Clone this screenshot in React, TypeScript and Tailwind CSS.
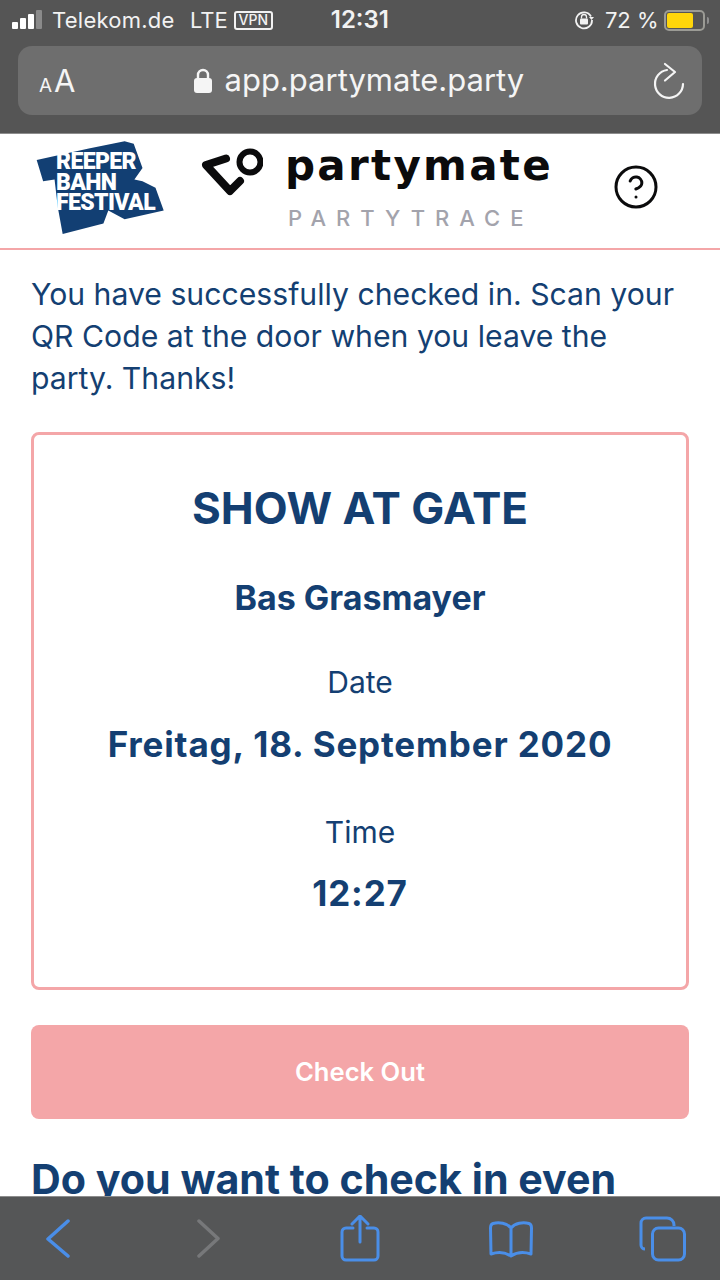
import React from 'react';
import { CircleHelp } from 'lucide-react';

const StatusBar: React.FC = () => (
  <div className="flex h-[40px] items-center pl-[12px] pr-[10px] text-[#f2f2f2]">
    <div className="mb-[2px] flex items-end gap-[2px]">
      <span className="h-[7px] w-[6px] rounded-[1px] bg-white" />
      <span className="h-[11px] w-[6px] rounded-[1px] bg-white" />
      <span className="h-[15px] w-[6px] rounded-[1px] bg-white" />
      <span className="h-[19px] w-[6px] rounded-[1px] bg-[#8a8a8a]" />
    </div>
    <span className="ml-[10px] w-[122px] text-[22px] tracking-[0.25px]">Telekom.de</span>
    <span className="ml-[16px] text-[22px]">LTE</span>
    <span className="ml-[6px] flex h-[19px] w-[39px] items-center justify-center rounded-[3px] border-2 border-[#f2f2f2] text-[14px] font-medium leading-none">
      VPN
    </span>
    <span className="ml-[58px] text-[24px] font-semibold">12:31</span>
    <svg className="ml-[185px]" width="20" height="20" viewBox="0 0 20 20" fill="none">
      <path d="M17 6.5A8 8 0 1 0 18 10" stroke="#f2f2f2" strokeWidth="1.8" />
      <path d="M15 7h5l-2.5 3z" fill="#f2f2f2" />
      <rect x="6" y="8.5" width="8" height="6" rx="1" fill="#f2f2f2" />
      <path d="M7.5 8.5V7a2.5 2.5 0 0 1 5 0v1.5" stroke="#f2f2f2" strokeWidth="1.3" />
    </svg>
    <span className="ml-[11px] text-[22px]">72 %</span>
    <div className="ml-[5px] flex h-[21px] w-[41px] items-center rounded-[5px] border-2 border-[#9b9b95] p-[1px]">
      <span className="h-[15px] w-[26px] rounded-[2px] bg-[#ffd60a]" />
    </div>
    <span className="ml-[2px] h-[7px] w-[2px] rounded-r-sm bg-[#8f8f8f]" />
  </div>
);

const UrlBar: React.FC = () => (
  <div className="mx-[18px] mt-[6px] flex h-[69px] items-center rounded-[14px] bg-[#6e6e6e] text-[#f5f5f5]">
    <span className="ml-[21px] flex items-baseline leading-none">
      <span className="text-[19px]">A</span>
      <span className="ml-[2px] text-[31px]">A</span>
    </span>
    <svg className="ml-[118px]" width="18" height="25" viewBox="0 0 18 25" fill="none">
      <path d="M4 11V7a5 5 0 0 1 10 0v4" stroke="#f5f5f5" strokeWidth="2.4" />
      <rect x="0" y="10" width="18" height="15" rx="3" fill="#f5f5f5" />
    </svg>
    <span className="ml-[13px] text-[31px]">app.partymate.party</span>
    <svg className="ml-auto mr-[16px]" width="34" height="38" viewBox="0 0 34 38" fill="none">
      <path d="M15 8A14 14 0 1 0 31 22" stroke="#f5f5f5" strokeWidth="2.2" strokeLinecap="round" />
      <path
        d="M13 2l10 8-10 8.500"
        stroke="#f5f5f5"
        strokeWidth="2.2"
        strokeLinecap="round"
        strokeLinejoin="round"
      />
    </svg>
  </div>
);

const FestivalLogo: React.FC = () => (
  <div className="relative ml-[36px] mt-[7px] h-[94px] w-[128px] shrink-0">
    <svg className="h-full w-full" viewBox="0 0 131 96" preserveAspectRatio="none" fill="#123f73">
      <path d="M.7 19.300L54 7.700 90.700.3 100 2.700 109 27.700 100.700 39.300 109 41 122.300 47.700 130.700 71 90.700 80 74 71 69 84.300 27.300 95 22.300 67.700 19 39.300 7.300 41z" />
    </svg>
    <div className='absolute left-[20px] top-[11px] font-["Roboto",sans-serif] text-[23px] font-black leading-[20.5px] tracking-[-0.6px] text-white'>
      <div>REEPER</div>
      <div>BAHN</div>
      <div>FESTIVAL</div>
    </div>
  </div>
);

const BrandMark: React.FC = () => (
  <div className="ml-[35px] mt-[9px] flex w-[413px] shrink-0 flex-col">
    <div className="flex items-start">
      <svg width="64" height="60" viewBox="0 0 64 60" fill="none">
        <circle cx="51" cy="19" r="10.500" stroke="#0b0b0c" strokeWidth="6" />
        <path
          d="M27 15.500L7 22 31 48 41 38"
          stroke="#0b0b0c"
          strokeWidth="8"
          strokeLinecap="round"
          strokeLinejoin="round"
        />
      </svg>
      <span className='ml-[22px] mt-[1.5px] font-["DejaVu_Sans",sans-serif] text-[42px] font-bold leading-none tracking-[2.3px] text-[#0b0b0c]'>
        partymate
      </span>
    </div>
    <span className="ml-[89px] mt-[4px] text-[22px] font-medium leading-none tracking-[10px] text-[#a3a3ac]">
      PARTYTRACE
    </span>
  </div>
);

const Header: React.FC = () => (
  <div className="flex h-[116px] shrink-0 items-start border-b-2 border-[#f4a6a8] bg-white">
    <FestivalLogo />
    <BrandMark />
    <CircleHelp className="mt-[29px] shrink-0 text-[#0b0b0c]" size={48} strokeWidth={1.5} />
  </div>
);

const Card: React.FC = () => (
  <div className="mt-[33px] flex h-[558px] flex-col items-center rounded-[8px] border-[3px] border-[#f4a6a8] pt-[46px] text-[#143f72]">
    <h2 className="text-[44px] font-bold leading-[54px]">SHOW AT GATE</h2>
    <p className="mt-[44px] text-[34px] font-bold leading-[38px]">Bas Grasmayer</p>
    <p className="mt-[48px] text-[30px] leading-[34px]">Date</p>
    <p className="mt-[25px] text-[35px] font-bold leading-[40px] tracking-[0.85px]">Freitag, 18. September 2020</p>
    <p className="mt-[51px] text-[30px] leading-[34px]">Time</p>
    <p className="mt-[24px] text-[35px] font-bold leading-[40px] tracking-[0.85px]">12:27</p>
  </div>
);

const BottomBar: React.FC = () => (
  <div className="flex h-[84px] shrink-0 items-center border-t border-[#8d8d8d] bg-[#555657] pl-[46px]">
    <svg width="24" height="40" viewBox="0 0 24 40" fill="none" stroke="#4a8ee8" strokeWidth="3.500" strokeLinecap="round" strokeLinejoin="round">
      <path d="M22 2L2 20 22 37" />
    </svg>
    <svg className="ml-[127px]" width="24" height="40" viewBox="0 0 24 40" fill="none" stroke="#77787a" strokeWidth="3.500" strokeLinecap="round" strokeLinejoin="round">
      <path d="M2 2L21 19.500 2 37" />
    </svg>
    <svg className="ml-[119px]" width="40" height="48" viewBox="0 0 40 48" fill="none" stroke="#4a8ee8" strokeWidth="3" strokeLinecap="round" strokeLinejoin="round">
      <path d="M13 13H6a4 4 0 0 0-4 4v24a4 4 0 0 0 4 4h28a4 4 0 0 0 4-4V17a4 4 0 0 0-4-4h-7" />
      <path d="M20 27V2M12 9l8-8 8 8" />
    </svg>
    <svg className="ml-[108px]" width="46" height="38" viewBox="0 0 46 38" fill="none" stroke="#4a8ee8" strokeWidth="3" strokeLinecap="round" strokeLinejoin="round">
      <path d="M23 8C19 3 11 2 5 3.500 3 4 2.500 6 2.500 8L3 34c6-2 14-2 20 2 6-4 14-4 20-2l.5-26c0-2-.5-4-2.500-4.500C35 2 27 3 23 8zM23 8v28" />
    </svg>
    <svg className="ml-[105px]" width="48" height="46" viewBox="0 0 48 46" fill="none" stroke="#4a8ee8" strokeWidth="3">
      <path d="M6 33a4 4 0 0 1-4-4V7a5 5 0 0 1 5-5h21a7 7 0 0 1 7 7v1" />
      <rect x="13.500" y="12" width="32" height="32" rx="6" />
    </svg>
  </div>
);

export default function App() {
  return (
    <div className='flex h-[1280px] w-[720px] flex-col overflow-hidden bg-white font-["Inter",sans-serif]'>
      <div className="h-[134px] shrink-0 border-b border-[#8d8d8d] bg-[#555555]">
        <StatusBar />
        <UrlBar />
      </div>
      <Header />
      <main className="min-h-0 flex-1 overflow-hidden px-[31px] pt-[23px]">
        <p className="text-[30.2px] leading-[42px] text-[#143f72]">
          You have successfully checked in. Scan your QR Code at the door when you leave the party. Thanks!
        </p>
        <Card />
        <button className="mt-[35px] h-[94px] w-full rounded-[8px] bg-[#f4a6a8] text-[25.6px] font-semibold text-white">
          Check Out
        </button>
        <h2 className="mt-[30px] text-[41.2px] font-bold leading-[60px] text-[#143f72]">
          Do you want to check in even more?
        </h2>
      </main>
      <BottomBar />
    </div>
  );
}
